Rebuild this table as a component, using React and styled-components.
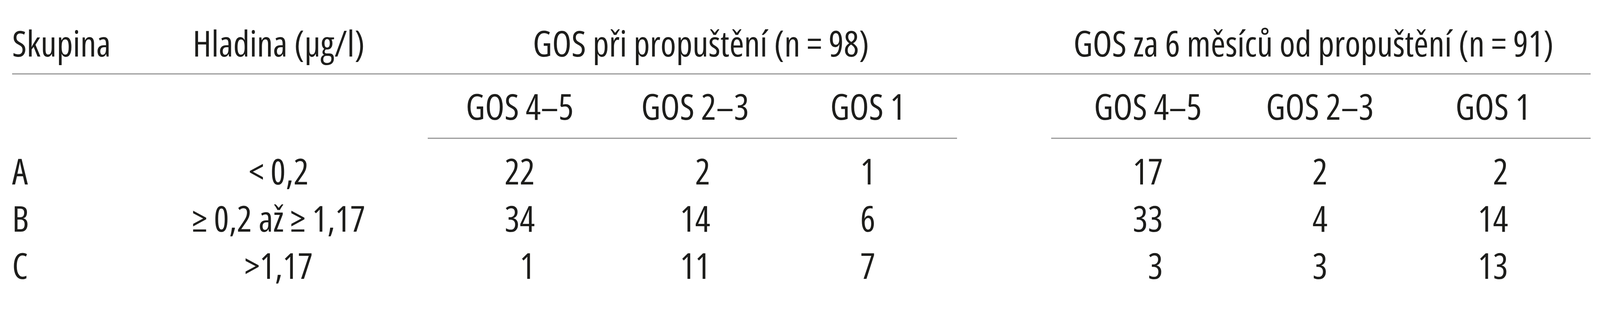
import styled, { createGlobalStyle } from "styled-components";

const GlobalStyle = createGlobalStyle`
  html, body {
    margin: 0;
    padding: 0;
    background: #fff;
  }
  body {
    font-family: "Open Sans", "Liberation Sans", sans-serif;
    color: #1d1d1b;
  }
`;

// sirky sloupcu: skupina, hladina, mezera, 3x GOS, mezera, 3x GOS
const COLUMNS = "408px 549px 107px 471px 427px 457px 241px 495px 386px 500px";

const LINE = "3px solid #9a9a9a";

const skupiny = [
  { skupina: "A", hladina: "< 0,2", pri: [22, 2, 1], za6: [17, 2, 2] },
  { skupina: "B", hladina: "≥ 0,2 až ≥ 1,17", pri: [34, 14, 6], za6: [33, 4, 14] },
  { skupina: "C", hladina: ">1,17", pri: [1, 11, 7], za6: [3, 3, 13] },
];

// kolik cislic ma nejsirsi cislo ve sloupci (zarovnani doprava)
const cislicePri = [2, 2, 1];
const cisliceZa6 = [2, 1, 2];

const podsloupce = ["GOS 4–5", "GOS 2–3", "GOS 1"];

function App() {
  return (
    <>
      <GlobalStyle />
      <Table>
        <HeadRow>
          <Cell>Skupina</Cell>
          <Cell align="center">Hladina (µg/l)</Cell>
          <span />
          <GroupTitle span="4 / 7" shift={22}>GOS při propuštění (n = 98)</GroupTitle>
          <GroupTitle span="8 / 11" shift={-19}>GOS za 6 měsíců od propuštění (n = 91)</GroupTitle>
        </HeadRow>

        <SubHeadRow>
          <span />
          <span />
          <span />
          {podsloupce.map((nazev) => (
            <SubHead key={"pri" + nazev}>{nazev}</SubHead>
          ))}
          <span />
          {podsloupce.map((nazev) => (
            <SubHead key={"za6" + nazev}>{nazev}</SubHead>
          ))}
        </SubHeadRow>

        <Body>
          {skupiny.map((radek) => (
            <DataRow key={radek.skupina}>
              <Cell>{radek.skupina}</Cell>
              <Cell align="center">{radek.hladina}</Cell>
              <span />
              {radek.pri.map((n, i) => (
                <Cell align="center" key={"pri" + i}>
                  <Num digits={cislicePri[i]}>{n}</Num>
                </Cell>
              ))}
              <span />
              {radek.za6.map((n, i) => (
                <Cell align="center" key={"za6" + i}>
                  <Num digits={cisliceZa6[i]}>{n}</Num>
                </Cell>
              ))}
            </DataRow>
          ))}
        </Body>
      </Table>
    </>
  );
}

const Table = styled.div`
  width: 4041px;
  padding: 0 24px 0 31px;
  font-size: 91px;
  font-stretch: 77%;
  line-height: 121px;
  white-space: nowrap;
`;

const Row = styled.div`
  display: grid;
  grid-template-columns: ${COLUMNS};
`;

const HeadRow = styled(Row)`
  padding-top: 50px;
  padding-bottom: 17px;
  border-bottom: ${LINE};
`;

const SubHeadRow = styled(Row)`
  padding-top: 21px;
`;

const Body = styled.div`
  padding-top: 22px;
`;

const DataRow = styled(Row)``;

const Cell = styled.div`
  text-align: ${(props) => props.align || "left"};
`;

const GroupTitle = styled.div`
  grid-column: ${(props) => props.span};
  text-align: center;
  padding-left: ${(props) => (props.shift > 0 ? props.shift * 2 : 0)}px;
  padding-right: ${(props) => (props.shift < 0 ? -props.shift * 2 : 0)}px;
`;

const SubHead = styled.div`
  text-align: center;
  padding-bottom: 20px;
  border-bottom: ${LINE};
`;

const Num = styled.span`
  display: inline-block;
  width: ${(props) => props.digits}ch;
  text-align: right;
`;

export default App;
